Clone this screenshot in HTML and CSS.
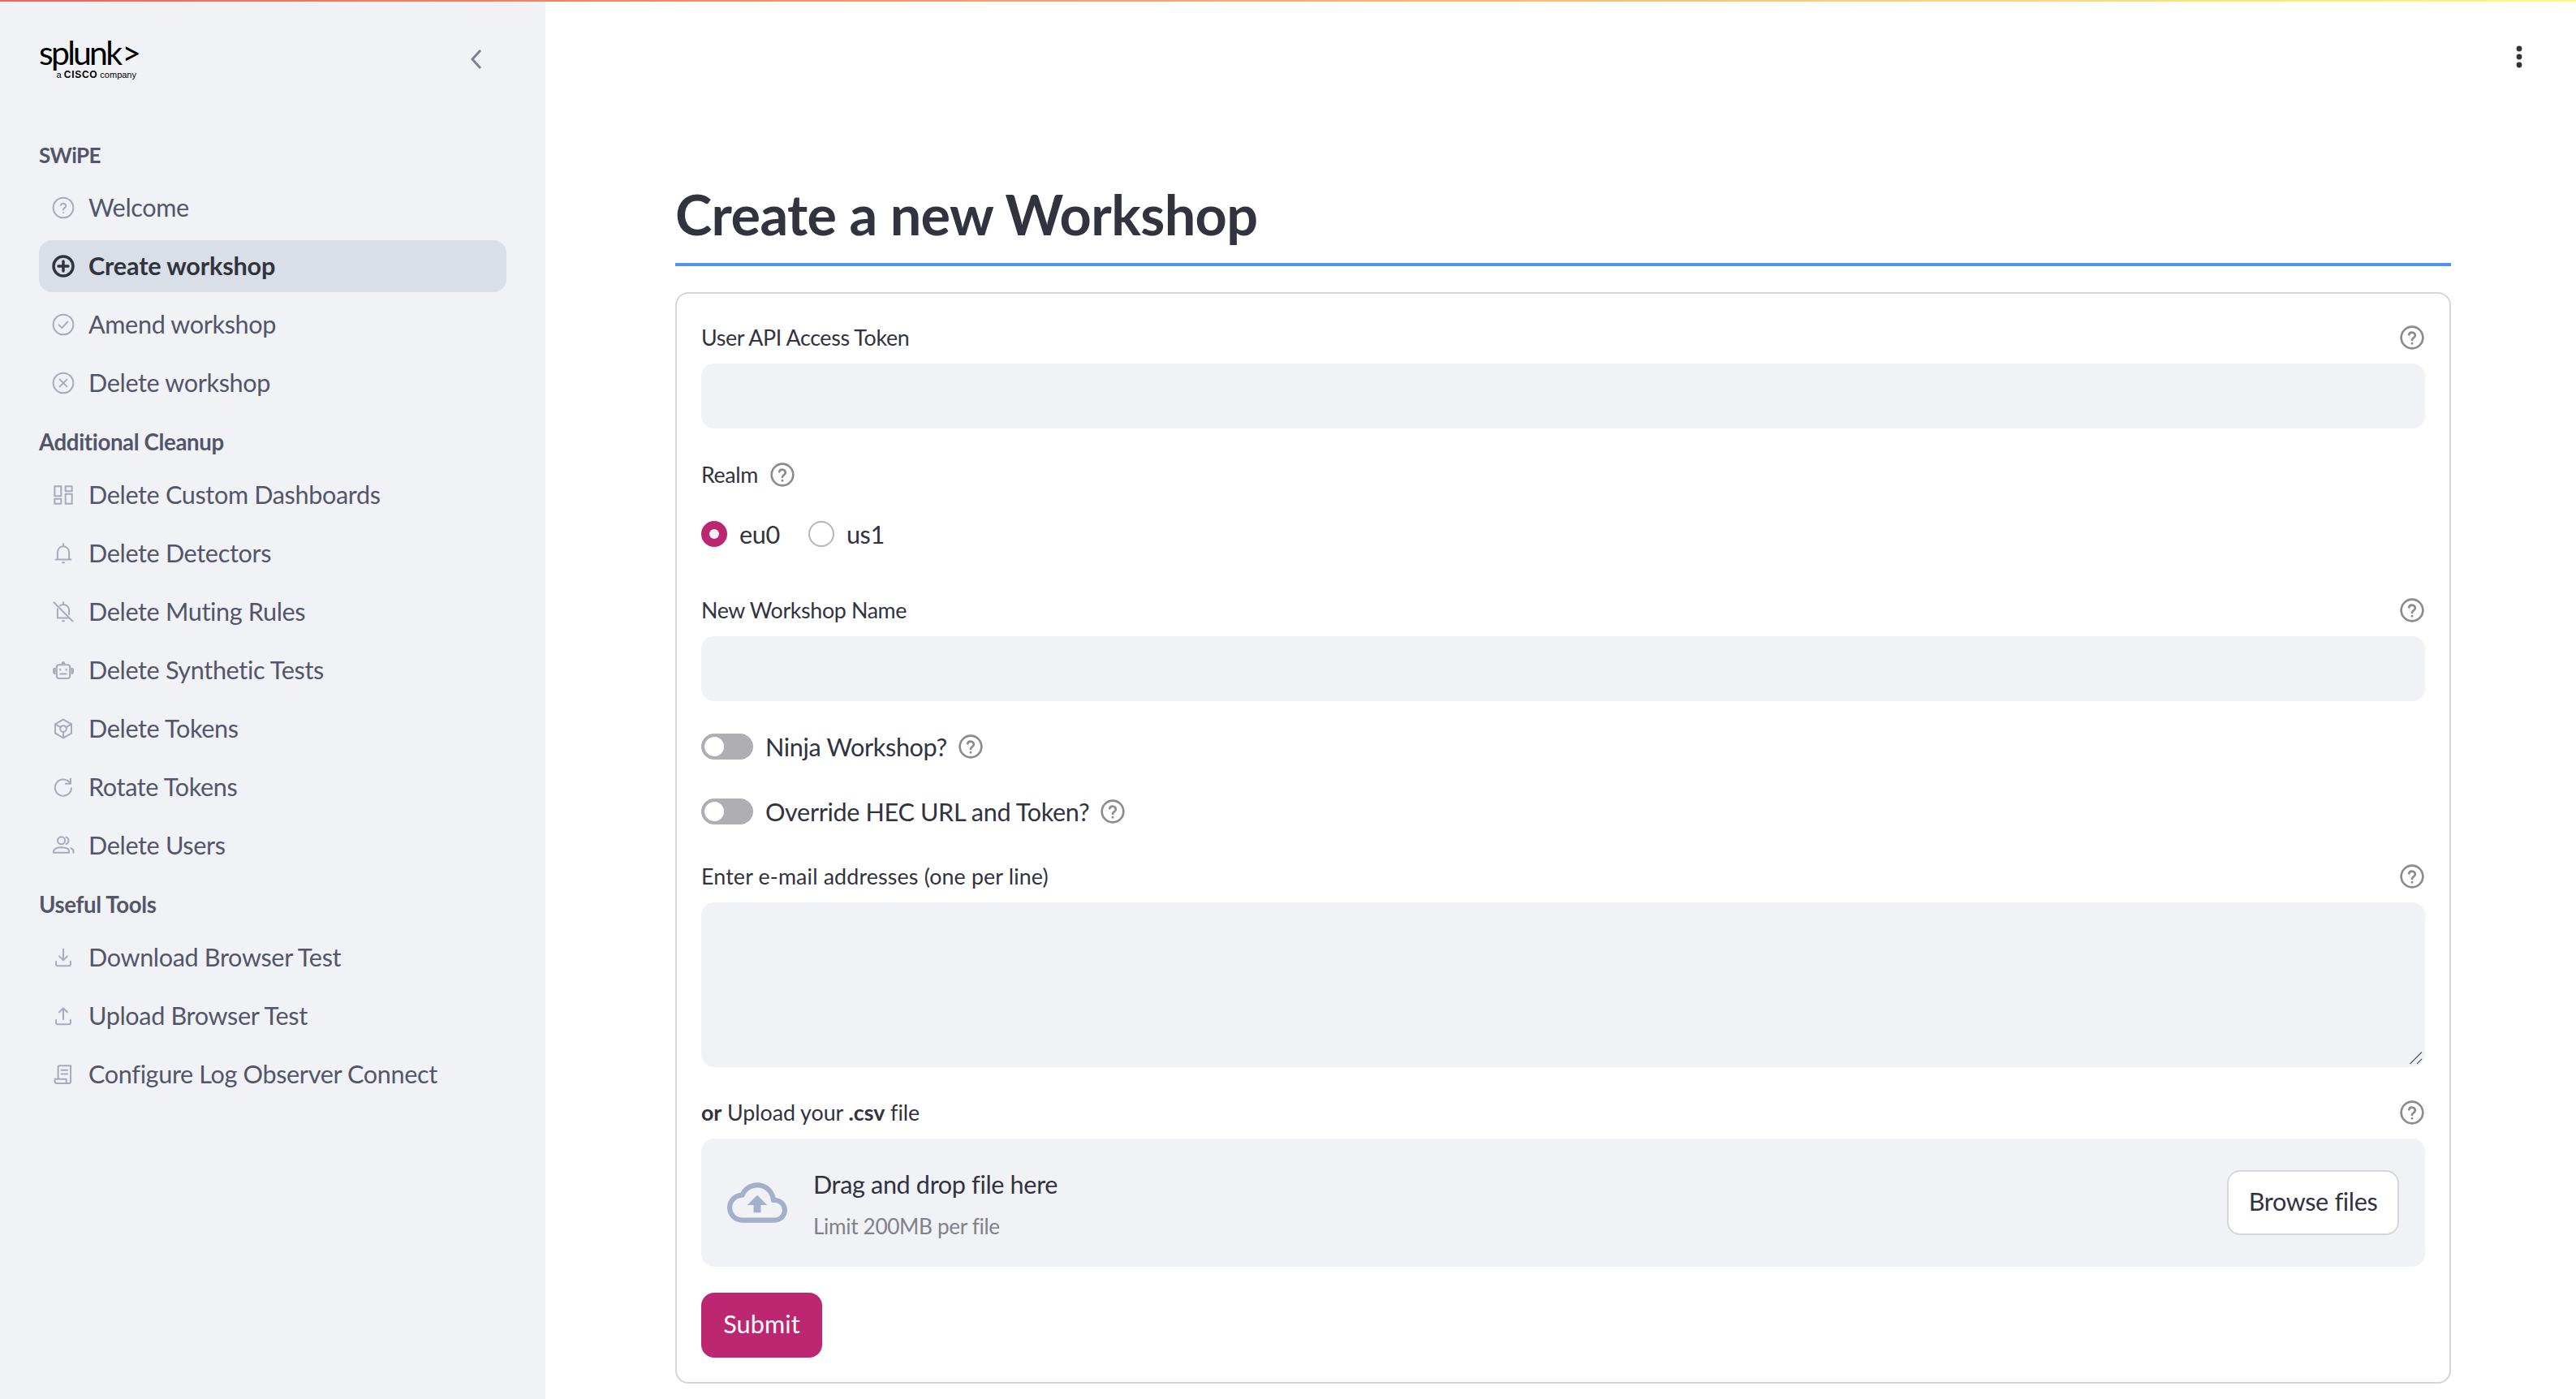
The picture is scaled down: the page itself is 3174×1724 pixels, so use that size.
FILE: index.html
```html
<!DOCTYPE html>
<html lang="en">

<head>
    <meta charset="UTF-8">
    <meta name="viewport" content="width=device-width, initial-scale=1.0">
    <title>Create a new Workshop</title>
    <link rel="stylesheet" href="styles.css">
</head>

<body>
    <svg class="sprite" aria-hidden="true">
        <symbol id="i-help" viewBox="0 0 24 24"><circle cx="12" cy="12" r="10"/><path d="M9.1 9.2a3 3 0 0 1 5.8.9c0 2-2.9 2.2-2.9 4.1"/><path d="M12 17.4v.1"/></symbol>
        <symbol id="i-welcome" viewBox="0 0 24 24"><circle cx="12" cy="12" r="9.25"/><path d="M9.6 9.6a2.5 2.5 0 0 1 4.8.7c0 1.7-2.4 1.9-2.4 3.5"/><path d="M12 16.6v.1"/></symbol>
        <symbol id="i-add" viewBox="0 0 24 24"><circle cx="12" cy="12" r="9"/><path class="thin" d="M12 7.5v9M7.5 12h9"/></symbol>
        <symbol id="i-check" viewBox="0 0 24 24"><circle cx="12" cy="12" r="9.25"/><path d="M8 12.3l2.8 2.8L16 9.4"/></symbol>
        <symbol id="i-cross" viewBox="0 0 24 24"><circle cx="12" cy="12" r="9.25"/><path d="M8.7 8.7l6.6 6.6M15.3 8.7l-6.6 6.6"/></symbol>
        <symbol id="i-dash" viewBox="0 0 24 24"><rect x="4" y="4" width="6" height="9"/><rect x="14" y="4" width="6" height="4.5"/><rect x="14" y="11" width="6" height="9"/><rect x="4" y="15.5" width="6" height="4.5"/></symbol>
        <symbol id="i-bell" viewBox="0 0 24 24"><path d="M4.9 17.6h14.2M6.7 17.6v-6.8a5.3 5.3 0 0 1 10.6 0v6.8M12 3.2v2.2M11.2 20.4h1.6"/></symbol>
        <symbol id="i-bell-off" viewBox="0 0 24 24"><path d="M3.4 3.4l17.2 17.2M6.7 9.4v8.2h10.6M9 6.2a5.3 5.3 0 0 1 8.3 4.6v3.6M12 3.2v2M11.2 20.4h1.6"/></symbol>
        <symbol id="i-robot" viewBox="0 0 24 24"><rect x="5.9" y="7" width="12.2" height="12.5" rx="2"/><path class="solid" d="M10.3 5.5a1.7 1.7 0 0 1 3.4 0v1h-3.4zM2.3 11.2a2 2 0 0 1 2.6-1.6v6.2a2.6 2.6 0 0 1-2.6-2.2zM21.7 11.2a2 2 0 0 0-2.6-1.6v6.2a2.6 2.6 0 0 0 2.6-2.2z"/><path d="M9.2 11v.8M14.8 11v.8M9.2 15.4h5.6"/></symbol>
        <symbol id="i-token" viewBox="0 0 24 24"><path d="M12 3.4l7.5 4.3v8.6L12 20.6l-7.5-4.3V7.7z"/><circle cx="12" cy="12" r="2.9"/><path d="M4.8 8l4.7 2.6M19.2 8l-4.7 2.6M12 15v5.4"/></symbol>
        <symbol id="i-rotate" viewBox="0 0 24 24"><path d="M18.2 8.2A7.6 7.6 0 1 0 19.5 13"/><path d="M18.7 4.2v4.6h-4.6"/></symbol>
        <symbol id="i-users" viewBox="0 0 24 24"><circle cx="10.2" cy="7.4" r="3.4"/><path d="M3 18.6v-1.1c0-2.4 3-3.8 7.2-3.8s7.2 1.4 7.2 3.8v1.1z"/><path d="M14.6 4.2a3.4 3.4 0 0 1 0 6.4M19 14.4c1.5.6 2.4 1.6 2.4 3v1.2"/></symbol>
        <symbol id="i-download" viewBox="0 0 24 24"><path d="M12 4.2v10M8.3 10.8l3.7 3.6 3.7-3.6M5.3 15.6v2.9c0 .7.4 1.1 1.1 1.1h11.2c.7 0 1.1-.4 1.1-1.1v-2.9"/></symbol>
        <symbol id="i-upload" viewBox="0 0 24 24"><path d="M12 15V5M8.3 8.4L12 4.8l3.7 3.6M5.3 15.6v2.9c0 .7.4 1.1 1.1 1.1h11.2c.7 0 1.1-.4 1.1-1.1v-2.9"/></symbol>
        <symbol id="i-log" viewBox="0 0 24 24"><path d="M7.2 16.4V5.4c0-.8.5-1.4 1.4-1.4h10.2v14.6c0 1-.7 1.6-1.6 1.6H6c-1 0-1.8-.6-1.8-1.6v-2.2h10.6v3.6"/><path d="M10.2 8h5.6M10.2 11.6h5.6"/></symbol>
    </svg>

    <div class="decoration"></div>

    <div class="app">
        <aside class="sidebar">
            <div class="sidebar-top">
                <div class="logo">
                    <div class="logo-word">splunk<span class="logo-caret">&gt;</span></div>
                    <div class="logo-sub">a <b>CISCO</b> company</div>
                </div>
                <svg class="collapse" viewBox="0 0 32 32"><path d="M22 5L12 16l10 11"/></svg>
            </div>

            <nav class="nav">
                <div class="nav-header nav-brand">SWiPE</div>
                <a class="nav-item"><svg class="nav-icon"><use href="#i-welcome"/></svg>Welcome</a>
                <a class="nav-item active"><svg class="nav-icon"><use href="#i-add"/></svg>Create workshop</a>
                <a class="nav-item"><svg class="nav-icon"><use href="#i-check"/></svg>Amend workshop</a>
                <a class="nav-item"><svg class="nav-icon"><use href="#i-cross"/></svg>Delete workshop</a>

                <div class="nav-header">Additional Cleanup</div>
                <a class="nav-item"><svg class="nav-icon"><use href="#i-dash"/></svg>Delete Custom Dashboards</a>
                <a class="nav-item"><svg class="nav-icon"><use href="#i-bell"/></svg>Delete Detectors</a>
                <a class="nav-item"><svg class="nav-icon"><use href="#i-bell-off"/></svg>Delete Muting Rules</a>
                <a class="nav-item"><svg class="nav-icon"><use href="#i-robot"/></svg>Delete Synthetic Tests</a>
                <a class="nav-item"><svg class="nav-icon"><use href="#i-token"/></svg>Delete Tokens</a>
                <a class="nav-item"><svg class="nav-icon"><use href="#i-rotate"/></svg>Rotate Tokens</a>
                <a class="nav-item"><svg class="nav-icon"><use href="#i-users"/></svg>Delete Users</a>

                <div class="nav-header">Useful Tools</div>
                <a class="nav-item"><svg class="nav-icon"><use href="#i-download"/></svg>Download Browser Test</a>
                <a class="nav-item"><svg class="nav-icon"><use href="#i-upload"/></svg>Upload Browser Test</a>
                <a class="nav-item"><svg class="nav-icon"><use href="#i-log"/></svg>Configure Log Observer Connect</a>
            </nav>
        </aside>

        <main class="main">
            <div class="topbar">
                <svg class="menu-dots" viewBox="0 0 8 28"><circle cx="4" cy="4" r="3.4"/><circle cx="4" cy="14" r="3.4"/><circle cx="4" cy="24" r="3.4"/></svg>
            </div>

            <h1>Create a new Workshop</h1>

            <form class="card">
                <div class="label-row">
                    <label>User API Access Token</label>
                    <svg class="help"><use href="#i-help"/></svg>
                </div>
                <input class="text-input" type="password">

                <div class="label-row label-inline gap-realm">
                    <label>Realm</label>
                    <svg class="help"><use href="#i-help"/></svg>
                </div>
                <div class="radio-row">
                    <span class="radio checked"></span><span class="radio-text">eu0</span>
                    <span class="radio"></span><span class="radio-text">us1</span>
                </div>

                <div class="label-row gap-name">
                    <label>New Workshop Name</label>
                    <svg class="help"><use href="#i-help"/></svg>
                </div>
                <input class="text-input" type="text">

                <div class="toggle-row gap-ninja">
                    <span class="toggle"></span>
                    <span class="toggle-text">Ninja Workshop?</span>
                    <svg class="help"><use href="#i-help"/></svg>
                </div>
                <div class="toggle-row gap-hec">
                    <span class="toggle"></span>
                    <span class="toggle-text">Override HEC URL and Token?</span>
                    <svg class="help"><use href="#i-help"/></svg>
                </div>

                <div class="label-row gap-email">
                    <label class="label-email">Enter e-mail addresses (one per line)</label>
                    <svg class="help"><use href="#i-help"/></svg>
                </div>
                <div class="area-wrap">
                    <textarea class="text-area"></textarea>
                    <svg class="grip" viewBox="0 0 16 16"><path d="M15 .5L.5 15M15 9l-6 6"/></svg>
                </div>

                <div class="label-row gap-upload">
                    <label class="label-upload"><b>or</b> Upload your <b>.csv</b> file</label>
                    <svg class="help"><use href="#i-help"/></svg>
                </div>
                <div class="dropzone">
                    <svg class="cloud" viewBox="0 0 24 24"><path d="M19.35 10.04C18.67 6.59 15.64 4 12 4 9.11 4 6.6 5.64 5.35 8.04 2.34 8.36 0 10.91 0 14c0 3.31 2.69 6 6 6h13c2.76 0 5-2.24 5-5 0-2.64-2.05-4.78-4.65-4.96zM19 18H6c-2.21 0-4-1.79-4-4 0-2.05 1.53-3.76 3.56-3.97l1.07-.11.5-.95C8.08 7.14 9.94 6 12 6c2.62 0 4.88 1.86 5.39 4.43l.3 1.5 1.53.11c1.56.1 2.78 1.41 2.78 2.96 0 1.65-1.35 3-3 3zM8 13h2.55v3h2.9v-3H16l-4-4z"/></svg>
                    <div class="drop-text">
                        <div class="drop-title">Drag and drop file here</div>
                        <div class="drop-limit">Limit 200MB per file</div>
                    </div>
                    <button class="browse" type="button">Browse files</button>
                </div>

                <button class="submit" type="button">Submit</button>
            </form>
        </main>
    </div>
</body>

</html>
```

FILE: styles.css
```css
* {
    box-sizing: border-box;
}

html,
body {
    margin: 0;
    height: 100%;
    overflow: hidden;
}

body {
    font-family: Lato, "Noto Sans", sans-serif;
    font-size: 30.6px;
    letter-spacing: -0.35px;
    color: #31333f;
    background-color: #fff;
}

.sprite {
    display: none;
}

.decoration {
    position: absolute;
    top: 0;
    left: 0;
    right: 0;
    height: 2px;
    background: linear-gradient(90deg, #f0645c, #fff689);
}

.app {
    display: flex;
    height: 100%;
}

/* sidebar */
.sidebar {
    flex: 0 0 672px;
    background-color: #f0f2f6;
    padding: 0 48px;
}

.sidebar-top {
    display: flex;
    justify-content: space-between;
    height: 158px;
    padding-top: 44px;
}

.logo {
    width: 124px;
    color: #000;
}

.logo-word {
    font-size: 41px;
    line-height: 41px;
    letter-spacing: -2.8px;
    height: 41px;
    white-space: nowrap;
}

.logo-caret {
    margin-left: 2px;
}

.logo-sub {
    font-family: "Liberation Sans", sans-serif;
    font-size: 11px;
    line-height: 12px;
    letter-spacing: 0;
    text-align: right;
    margin-top: 1px;
    padding-right: 4px;
    white-space: nowrap;
}

.logo-sub b {
    font-size: 12px;
    font-weight: 700;
    letter-spacing: 0.7px;
}

.collapse {
    width: 32px;
    height: 32px;
    margin: 13px 22px 0 0;
    fill: none;
    stroke: #7c808f;
    stroke-width: 3;
}

.nav-header {
    display: flex;
    align-items: center;
    height: 66px;
    padding-bottom: 1px;
    font-size: 27.6px;
    font-weight: 700;
    color: #53566a;
}

.nav-brand {
    font-size: 26px;
    letter-spacing: -0.6px;
}

.nav-item {
    display: flex;
    align-items: center;
    gap: 15px;
    height: 64px;
    margin-bottom: 8px;
    padding: 0 0 2px 14px;
    border-radius: 16px;
    color: #53566a;
    white-space: nowrap;
}

.nav-icon {
    flex: none;
    width: 32px;
    height: 32px;
    margin-top: 2px;
    fill: none;
    stroke: #a7abba;
    stroke-width: 1.5;
    stroke-linecap: round;
    stroke-linejoin: round;
}

.nav-item.active {
    background-color: #dadee6;
    color: #31333f;
    font-weight: 700;
    letter-spacing: -0.15px;
}

.nav-item.active .nav-icon {
    stroke: #31333f;
    stroke-width: 2.6;
}

.nav-item.active .thin {
    stroke-width: 1.4;
}

.solid {
    fill: #a7abba;
    stroke: none;
}

/* main column */
.main {
    flex: 1;
    padding: 0 154px 0 160px;
}

.topbar {
    display: flex;
    justify-content: flex-end;
    height: 219px;
    margin-right: -88px;
    padding-top: 56px;
}

.menu-dots {
    width: 8px;
    height: 28px;
    fill: #31333f;
}

h1 {
    margin: 0 0 32px;
    height: 109px;
    padding-bottom: 15px;
    font-size: 68.4px;
    font-weight: 700;
    line-height: 90px;
    letter-spacing: -0.6px;
    border-bottom: 4px solid #4f94ea;
}

.card {
    border: 2px solid #d5d6da;
    border-radius: 16px;
    padding: 34px 30px 30px;
}

.label-row {
    display: flex;
    align-items: center;
    justify-content: space-between;
    height: 40px;
    margin-bottom: 12px;
    font-size: 26.8px;
}

.label-email {
    letter-spacing: 0.15px;
}

.label-upload {
    letter-spacing: -0.05px;
}

.label-inline {
    justify-content: flex-start;
    gap: 14px;
    margin-bottom: 0;
}

.label-row b {
    font-weight: 700;
}

.help {
    flex: none;
    width: 32px;
    height: 32px;
    fill: none;
    stroke: #8b8c92;
    stroke-width: 2;
    stroke-linecap: round;
}

.text-input,
.text-area {
    display: block;
    width: 100%;
    border: none;
    border-radius: 16px;
    background-color: #f0f2f6;
}

.text-input {
    height: 80px;
}

.area-wrap {
    position: relative;
}

.text-area {
    height: 203px;
    resize: none;
}

.grip {
    position: absolute;
    right: 3px;
    bottom: 3px;
    width: 16px;
    height: 16px;
    fill: none;
    stroke: #5c5e66;
    stroke-width: 1.3;
}

.gap-realm {
    margin-top: 37px;
}

.gap-name {
    margin-top: 54px;
}

.gap-ninja {
    margin-top: 36px;
}

.gap-hec {
    margin-top: 40px;
}

.gap-email {
    margin-top: 40px;
}

.gap-upload {
    margin-top: 36px;
}

.radio-row {
    display: flex;
    align-items: center;
    height: 40px;
    margin-top: 33px;
}

.radio {
    width: 32px;
    height: 32px;
    border-radius: 50%;
    border: 2px solid #b5b6bb;
    background-color: #fff;
}

.radio.checked {
    border: 10px solid #bd2670;
    background-color: #f0f2f6;
}

.radio-text {
    margin: 0 35px 0 15px;
}

.toggle-row {
    display: flex;
    align-items: center;
    height: 40px;
}

.toggle {
    width: 64px;
    height: 32px;
    margin-right: 15px;
    border: 4px solid #aeaeb3;
    border-radius: 16px;
    background: radial-gradient(circle at 12px 12px, #fff 11.5px, #aeaeb3 12.5px);
}

.toggle-text {
    margin-right: 13px;
}

.dropzone {
    display: flex;
    align-items: center;
    height: 158px;
    padding: 0 32px;
    border-radius: 16px;
    background-color: #f0f2f6;
}

.cloud {
    flex: none;
    width: 74px;
    height: 74px;
    margin-right: 32px;
    fill: #a3b0cb;
}

.drop-text {
    flex: 1;
    padding-top: 4px;
}

.drop-title {
    line-height: 40px;
    margin-bottom: 13px;
}

.drop-limit {
    font-size: 26.2px;
    line-height: 36px;
    color: #7f818b;
}

.browse,
.submit {
    font-family: inherit;
    font-size: 30.6px;
    letter-spacing: inherit;
    height: 80px;
    padding-bottom: 4px;
    border-radius: 16px;
}

.browse {
    width: 212px;
    border: 2px solid #d5d6da;
    background-color: #fff;
    color: #31333f;
}

.submit {
    display: block;
    width: 149px;
    margin-top: 32px;
    border: none;
    background-color: #bd2670;
    color: #fff;
    letter-spacing: 0.1px;
}
```
